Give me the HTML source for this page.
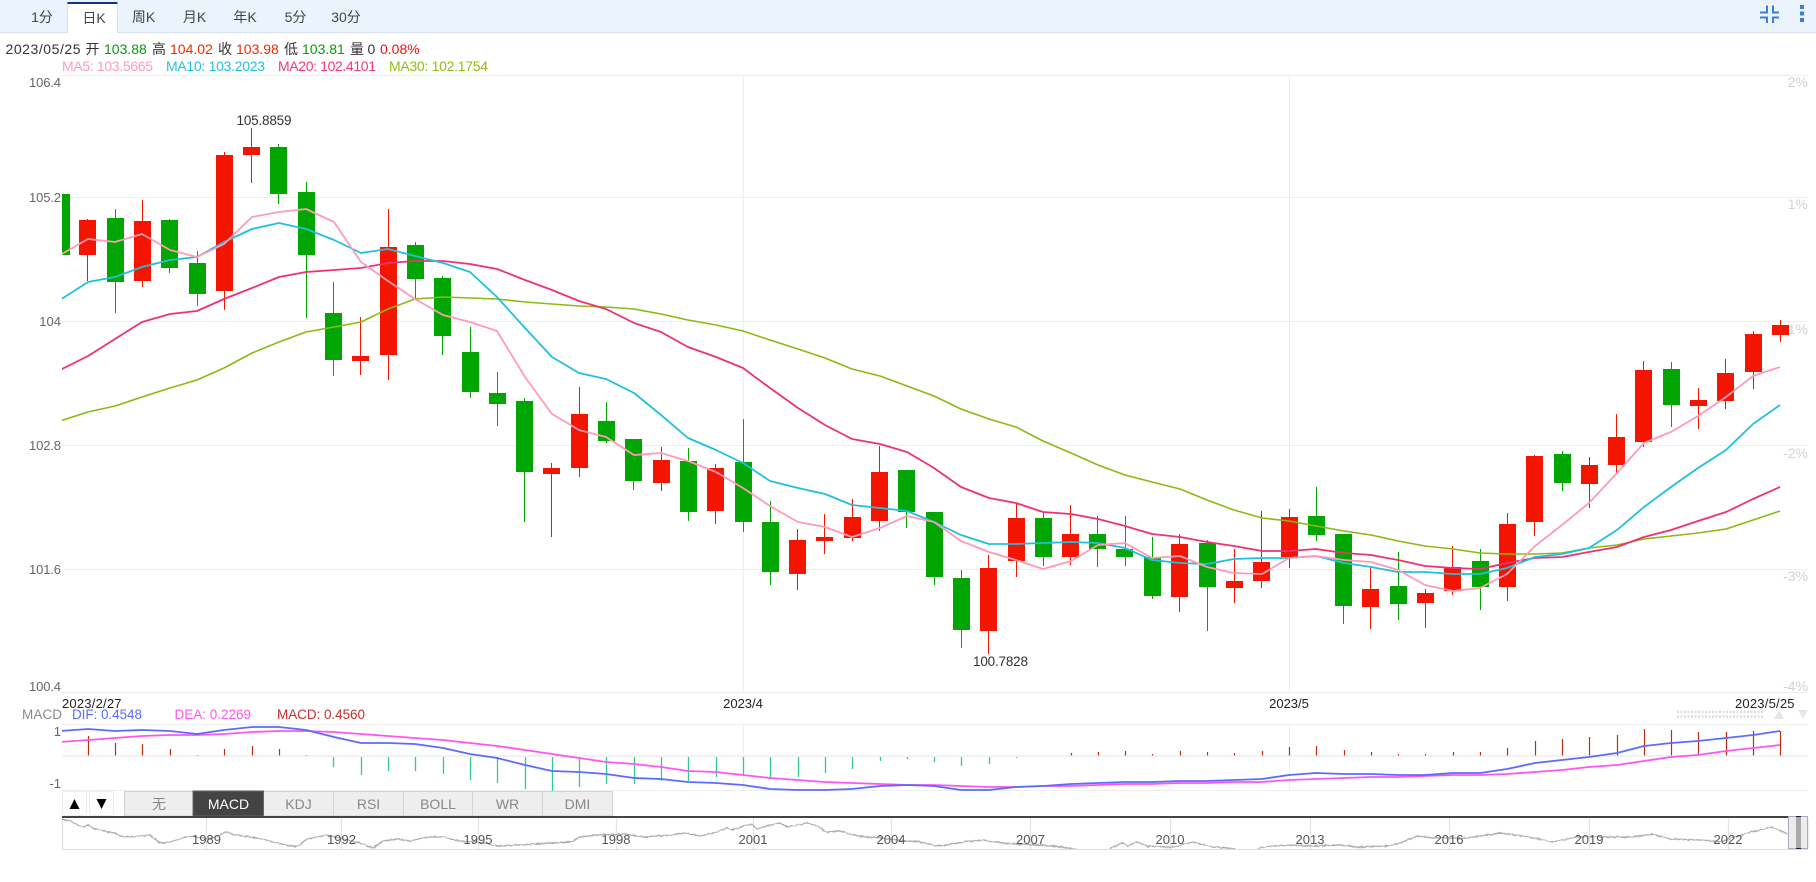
<!DOCTYPE html>
<html lang="zh-CN">
<head>
<meta charset="utf-8">
<title>K线图</title>
<style>
html,body{margin:0;padding:0;background:#fff;width:1816px;height:882px;overflow:hidden}
svg{display:block}
text{font-family:"Liberation Sans","Noto Sans CJK SC",sans-serif}
.ma{fill:none;stroke-linejoin:round}
.tab{font-size:14px;fill:#444;text-anchor:middle}
.ax{font-size:13px;fill:#666;text-anchor:end}
.rx{font-size:14px;fill:#d2d2d2;text-anchor:end}
.dt{font-size:13px;fill:#222}
.btn{font-size:14px;fill:#888;text-anchor:middle}
.yr{font-size:13px;fill:#555;text-anchor:middle}
.i{font-size:14px}
</style>
</head>
<body>
<svg width="1816" height="882" viewBox="0 0 1816 882" xmlns="http://www.w3.org/2000/svg">
<defs>
<clipPath id="cm"><rect x="62" y="60" width="1746" height="640"/></clipPath>
<clipPath id="cd"><rect x="62" y="724" width="1746" height="67"/></clipPath>
<clipPath id="cn"><rect x="62" y="818" width="1726" height="31"/></clipPath>
<filter id="jit" filterUnits="userSpaceOnUse" x="50" y="810" width="1760" height="50">
<feTurbulence type="fractalNoise" baseFrequency="0.3" numOctaves="2" seed="4"/>
<feDisplacementMap in="SourceGraphic" scale="2.5" xChannelSelector="G" yChannelSelector="R"/>
</filter>
</defs>

<!-- top bar -->
<rect x="0" y="0" width="1816" height="32" fill="#ebf3fd"/>
<rect x="0" y="32" width="1816" height="1" fill="#d6e0f0"/>
<rect x="67.5" y="2" width="50" height="31" fill="#fff"/>
<rect x="67" y="3" width="1" height="30" fill="#d6e0f0"/>
<rect x="117" y="3" width="1" height="30" fill="#d6e0f0"/>
<rect x="67.5" y="2" width="50" height="2" fill="#14308c"/>
<text class="tab" x="42" y="22">1分</text>
<text class="tab" x="94" y="23">日K</text>
<text class="tab" x="143.5" y="22">周K</text>
<text class="tab" x="194.5" y="22">月K</text>
<text class="tab" x="245" y="22">年K</text>
<text class="tab" x="295.5" y="22">5分</text>
<text class="tab" x="346" y="22">30分</text>
<path d="M1760 12.5H1767V5.5M1779 12.5H1773V5.5M1760 17.5H1767V23M1779 17.5H1773V23" fill="none" stroke="#3f7cd4" stroke-width="2"/>
<path d="M1800 5h4v4h-4zM1800 11.5h4v4h-4zM1800 18h4v4h-4z" fill="#3f7cd4"/>

<!-- info rows -->
<g class="i">
<text x="5.5" y="54" fill="#333" textLength="75">2023/05/25</text>
<text x="85.5" y="54" fill="#333">开</text>
<text x="104" y="54" fill="#0a9a0a">103.88</text>
<text x="152" y="54" fill="#333">高</text>
<text x="170" y="54" fill="#f22a00">104.02</text>
<text x="218" y="54" fill="#333">收</text>
<text x="236" y="54" fill="#f22a00">103.98</text>
<text x="284" y="54" fill="#333">低</text>
<text x="302" y="54" fill="#0a9a0a">103.81</text>
<text x="350" y="54" fill="#333">量</text>
<text x="367.5" y="54" fill="#333">0</text>
<text x="380" y="54" fill="#f51010">0.08%</text>
<text x="62" y="71" fill="#ff9cb9" textLength="91">MA5: 103.5665</text>
<text x="166" y="71" fill="#22c1e0" textLength="99">MA10: 103.2023</text>
<text x="278" y="71" fill="#f2367d" textLength="98">MA20: 102.4101</text>
<text x="389" y="71" fill="#92bc14" textLength="99">MA30: 102.1754</text>
</g>

<!-- grid -->
<path d="M62 75.5H1808M62 197.5H1808M62 321.5H1808M62 445.5H1808M62 569.5H1808M62 692.5H1808M743.5 75V692M1289.5 75V692" stroke="#eeeeee" stroke-width="1" fill="none"/>

<!-- axis labels -->
<text class="ax" x="61" y="87" textLength="32">106.4</text>
<text class="ax" x="61" y="202" textLength="32">105.2</text>
<text class="ax" x="61" y="326">104</text>
<text class="ax" x="61" y="450" textLength="32">102.8</text>
<text class="ax" x="61" y="574" textLength="32">101.6</text>
<text class="ax" x="61" y="691" textLength="32">100.4</text>
<text class="rx" x="1808" y="87">2%</text>
<text class="rx" x="1808" y="209">1%</text>
<text class="rx" x="1808" y="334">-1%</text>
<text class="rx" x="1808" y="458">-2%</text>
<text class="rx" x="1808" y="581">-3%</text>
<text class="rx" x="1808" y="691">-4%</text>

<!-- candles -->
<g clip-path="url(#cm)" shape-rendering="crispEdges">
<path fill="none" stroke="#f41500" stroke-width="1" d="M87.5 219V281M142.5 200V287M224.5 152V310M251.5 128V183M360.5 317V375M388.5 209V380M551.5 463V537M579.5 387V477M661.5 447V491M715.5 464V524M797.5 529V590M824.5 514V554M852.5 499V541M879.5 446V531M988.5 555V654M1016.5 504V577M1070.5 505V565M1179.5 534V612M1234.5 549V603M1261.5 511V588M1289.5 509V568M1370.5 567V629M1425.5 589V628M1452.5 546V595M1507.5 513V601M1534.5 455V536M1589.5 457V508M1616.5 414V473M1643.5 361V447M1698.5 388V429M1725.5 359V409M1753.5 331V389M1780.5 320V342"/>
<path fill="none" stroke="#02a602" stroke-width="1" d="M115.5 209V313M169.5 219V273M197.5 251V306M278.5 144V204M306.5 182V318M333.5 282V376M415.5 242V300M442.5 276V355M470.5 327V398M497.5 372V426M524.5 398V522M606.5 402V443M633.5 439V490M688.5 448V521M743.5 419V532M770.5 501V585M906.5 470V528M934.5 512V585M961.5 570V648M1043.5 513V566M1097.5 516V567M1125.5 516V566M1152.5 537V599M1207.5 540V631M1316.5 487V541M1343.5 534V624M1398.5 552V620M1480.5 549V610M1562.5 451V491M1671.5 362V427"/>
<path fill="#f41500" d="M79 220h17v35h-17zM134 221h17v60h-17zM216 155h17v136h-17zM243 147h17v8h-17zM352 356h17v5h-17zM380 247h17v108h-17zM543 468h17v6h-17zM571 414h17v54h-17zM653 460h17v23h-17zM707 468h17v43h-17zM789 540h17v34h-17zM816 537h17v4h-17zM844 517h17v21h-17zM871 472h17v49h-17zM980 568h17v63h-17zM1008 518h17v43h-17zM1062 534h17v23h-17zM1171 544h17v53h-17zM1226 581h17v7h-17zM1253 562h17v19h-17zM1281 517h17v40h-17zM1362 589h17v18h-17zM1417 593h17v10h-17zM1444 567h17v24h-17zM1499 524h17v63h-17zM1526 456h17v66h-17zM1581 465h17v19h-17zM1608 437h17v28h-17zM1635 370h17v72h-17zM1690 400h17v6h-17zM1717 373h17v28h-17zM1745 334h17v38h-17zM1772 325h17v10h-17z"/>
<path fill="#02a602" d="M62 194h8v61h-8zM107 218h17v64h-17zM161 220h17v48h-17zM189 263h17v31h-17zM270 147h17v47h-17zM298 192h17v63h-17zM325 313h17v47h-17zM407 245h17v34h-17zM434 278h17v58h-17zM462 352h17v40h-17zM489 393h17v11h-17zM516 401h17v71h-17zM598 421h17v20h-17zM625 439h17v42h-17zM680 461h17v51h-17zM735 462h17v60h-17zM762 522h17v50h-17zM898 470h17v42h-17zM926 512h17v65h-17zM953 578h17v52h-17zM1035 518h17v39h-17zM1089 534h17v15h-17zM1116 549h17v8h-17zM1144 557h17v39h-17zM1199 543h17v44h-17zM1308 516h17v19h-17zM1335 534h17v72h-17zM1390 586h17v18h-17zM1472 561h17v26h-17zM1554 454h17v29h-17zM1663 369h17v36h-17z"/>
</g>

<!-- moving averages -->
<g clip-path="url(#cm)">
<polyline class="ma" stroke="#8db812" stroke-width="1.6" points="60,421 88,412 115,406 142,397 170,388 197,380 224,368 252,353 279,342 306,332 334,327 361,322 388,309 415,299 443,297 470,298 497,299 525,302 552,304 579,306 606,307 634,309 661,314 688,320 716,325 743,331 770,340 798,349 825,358 852,369 880,376 907,386 934,396 961,409 989,419 1016,427 1043,441 1071,453 1098,465 1125,475 1152,482 1180,489 1207,500 1234,510 1262,518 1289,521 1316,526 1344,531 1371,535 1398,541 1425,546 1453,549 1480,553 1507,554 1535,554 1562,553 1589,548 1617,545 1644,539 1671,536 1698,533 1726,529 1753,520 1780,511"/>
<polyline class="ma" stroke="#ee3176" stroke-width="1.8" points="60,370 88,356 115,339 142,322 170,314 197,311 224,299 252,288 279,277 306,272 334,270 361,268 388,263 415,261 443,261 470,264 497,269 525,280 552,290 579,301 606,309 634,323 661,332 688,347 716,357 743,368 770,388 798,408 825,425 852,439 880,444 907,452 934,468 961,487 989,498 1016,503 1043,512 1071,514 1098,519 1125,526 1152,534 1180,537 1207,542 1234,546 1262,551 1289,551 1316,549 1344,553 1371,555 1398,560 1425,566 1453,568 1480,569 1507,563 1535,558 1562,557 1589,552 1617,547 1644,537 1671,530 1698,521 1726,512 1753,499 1780,487"/>
<polyline class="ma" stroke="#1fc0de" stroke-width="1.8" points="60,300 88,282 115,277 142,267 170,260 197,257 224,242 252,229 279,223 306,229 334,240 361,253 388,249 415,256 443,263 470,272 497,297 525,328 552,357 579,373 606,379 634,393 661,415 688,438 716,450 743,463 770,481 798,488 825,494 852,505 880,508 907,511 934,522 961,535 989,544 1016,544 1043,543 1071,542 1098,543 1125,548 1152,560 1180,563 1207,564 1234,559 1262,558 1289,558 1316,556 1344,563 1371,567 1398,572 1425,572 1453,574 1480,574 1507,568 1535,557 1562,554 1589,548 1617,530 1644,507 1671,487 1698,468 1726,450 1753,424 1780,405"/>
<polyline class="ma" stroke="#ff9ab8" stroke-width="1.8" points="60,255 88,239 115,242 142,234 170,250 197,257 224,244 252,217 279,212 306,209 334,222 361,262 388,281 415,299 443,315 470,322 497,331 525,377 552,414 579,430 606,437 634,455 661,453 688,461 716,472 743,488 770,506 798,522 825,527 852,537 880,528 907,516 934,522 961,541 989,552 1016,560 1043,569 1071,561 1098,545 1125,543 1152,558 1180,556 1207,567 1234,573 1262,574 1289,558 1316,556 1344,560 1371,562 1398,570 1425,585 1453,591 1480,588 1507,574 1535,546 1562,525 1589,503 1617,473 1644,443 1671,432 1698,416 1726,397 1753,376 1780,367"/>
</g>

<text x="236.5" y="125" font-size="13.5" fill="#333" textLength="55">105.8859</text>
<text x="973" y="666" font-size="13.5" fill="#333" textLength="55">100.7828</text>

<!-- x axis -->
<text class="dt" x="62" y="708" textLength="59.5">2023/2/27</text>
<text class="dt" x="743" y="708" text-anchor="middle">2023/4</text>
<text class="dt" x="1289" y="708" text-anchor="middle">2023/5</text>
<text class="dt" x="1735" y="708" textLength="59.5">2023/5/25</text>

<!-- macd legend -->
<text x="22" y="719" font-size="13.5" fill="#888" textLength="40">MACD</text>
<text x="72" y="719" font-size="13.5" fill="#5a6cff" textLength="70">DIF: 0.4548</text>
<text x="174.5" y="719" font-size="13.5" fill="#ff55f0" textLength="76.5">DEA: 0.2269</text>
<text x="277" y="719" font-size="13.5" fill="#c43030" textLength="88">MACD: 0.4560</text>

<!-- dotted slider + arrows -->
<path d="M1677 712H1763M1677 716.5H1763" stroke="#dcdcdc" stroke-width="2.5" stroke-dasharray="2 1.5" fill="none"/>
<path d="M1774 719l5-9 5 9z" fill="#e6e6e6"/>
<path d="M1798 710l5 9 5-9z" fill="#e6e6e6"/>

<!-- macd grid -->
<path d="M62 724.5H1808M62 790.5H1808M743.5 724V790M1289.5 724V790" stroke="#eeeeee" fill="none"/>
<rect x="62" y="755" width="1746" height="2" fill="#f2f2f2"/>
<text class="ax" x="61" y="736">1</text>
<text class="ax" x="61" y="788">-1</text>

<g clip-path="url(#cd)">
<path fill="none" stroke="#bd2e10" stroke-width="1.2" d="M88.5 755.5V736M115.5 755.5V743M142.5 755.5V744M170.5 755.5V749M197.5 755.5V755M224.5 755.5V749M252.5 755.5V746M279.5 755.5V749M306.5 755.5V755M1071.5 755.5V753M1098.5 755.5V752M1125.5 755.5V751M1152.5 755.5V754M1180.5 755.5V751M1207.5 755.5V752M1234.5 755.5V753M1262.5 755.5V751M1289.5 755.5V747M1316.5 755.5V746M1344.5 755.5V750M1371.5 755.5V752M1398.5 755.5V754M1425.5 755.5V754M1453.5 755.5V752M1480.5 755.5V752M1507.5 755.5V748M1535.5 755.5V741M1562.5 755.5V739M1589.5 755.5V737M1617.5 755.5V735M1644.5 755.5V729M1671.5 755.5V730M1698.5 755.5V732M1726.5 755.5V732M1753.5 755.5V731M1780.5 755.5V731"/>
<path fill="none" stroke="#33c79c" stroke-width="1.3" d="M333.5 757V767M361.5 757V775M388.5 757V771M415.5 757V771M443.5 757V774M470.5 757V780M497.5 757V783M525.5 757V789M552.5 757V791M579.5 757V787M606.5 757V784M634.5 757V784M661.5 757V781M688.5 757V781M716.5 757V777M743.5 757V776M770.5 757V779M798.5 757V777M825.5 757V773M852.5 757V769M880.5 757V761M907.5 757V759M934.5 757V762M961.5 757V766M989.5 757V764M1016.5 757V758"/>
<polyline class="ma" stroke="#ff55f0" stroke-width="1.8" points="60,742 88,740 115,738 142,736 170,735 197,735 224,734 252,732 279,731 306,731 334,732 361,734 388,736 415,738 443,740 470,743 497,746 525,750 552,754 579,758 606,762 634,764 661,767 688,771 716,772 743,775 770,778 798,780 825,782 852,783 880,784 907,785 934,785 961,786 989,787 1016,787 1043,786 1071,786 1098,785 1125,784 1152,784 1180,783 1207,783 1234,782 1262,782 1289,780 1316,779 1344,778 1371,777 1398,777 1425,776 1453,775 1480,775 1507,774 1535,772 1562,770 1589,767 1617,765 1644,761 1671,757 1698,755 1726,751 1753,748 1780,745"/>
<polyline class="ma" stroke="#5a6cff" stroke-width="1.8" points="60,731 88,729 115,731 142,730 170,731 197,734 224,730 252,727 279,727 306,730 334,737 361,743 388,743 415,744 443,748 470,754 497,758 525,765 552,771 579,772 606,774 634,778 661,779 688,782 716,783 743,785 770,789 798,790 825,790 852,789 880,786 907,785 934,786 961,790 989,790 1016,787 1043,786 1071,784 1098,783 1125,782 1152,782 1180,781 1207,781 1234,780 1262,779 1289,775 1316,773 1344,774 1371,774 1398,775 1425,775 1453,773 1480,773 1507,769 1535,763 1562,760 1589,757 1617,753 1644,746 1671,743 1698,741 1726,738 1753,735 1780,731"/>
</g>

<!-- buttons -->
<rect x="62.5" y="791.5" width="24" height="24" fill="#fff" stroke="#f0f0f0"/>
<rect x="89.5" y="791.5" width="24" height="24" fill="#fff" stroke="#f0f0f0"/>
<path d="M69.5 809l5-10 5 10z" fill="#000"/>
<path d="M96.5 799l5 10 5-10z" fill="#000"/>
<rect x="124.5" y="791.5" width="488" height="24.5" fill="#eeeeee" stroke="#d4d4d4"/>
<path d="M263.5 791V816M333.5 791V816M403.5 791V816M472.5 791V816M542.5 791V816" stroke="#d4d4d4"/>
<rect x="193" y="791" width="70.5" height="25" fill="#444" stroke="#666"/>
<text class="btn" x="159" y="809">无</text>
<text class="btn" x="228.5" y="809" style="fill:#fff">MACD</text>
<text class="btn" x="298.5" y="809">KDJ</text>
<text class="btn" x="368.5" y="809">RSI</text>
<text class="btn" x="438" y="809">BOLL</text>
<text class="btn" x="507.5" y="809">WR</text>
<text class="btn" x="577.5" y="809">DMI</text>

<!-- navigator -->
<rect x="62" y="816" width="1726" height="2" fill="#444"/>
<path d="M62.5 818V849M1808 818V849M62 849.5H1808" stroke="#dddddd" fill="none"/>
<path d="M206.5 818V849M341.5 818V849M478.5 818V849M616.5 818V849M753.5 818V849M891.5 818V849M1030.5 818V849M1170.5 818V849M1310.5 818V849M1449.5 818V849M1589.5 818V849M1728.5 818V849" stroke="#e4e4e4" stroke-width="1.2" fill="none"/>
<g clip-path="url(#cn)">
<polyline class="ma" stroke="#b0b0b0" stroke-width="1.4" filter="url(#jit)" points="62,819 70,821 78,825 83,827 88,825 93,828 103,831 115,833 120,836 130,837 140,836 150,835 160,843 170,842 183,838 192,836 207,839 217,837 225,832 237,835 250,837 263,839 277,843 290,846 298,846 307,839 317,837 327,835 343,839 360,843 373,848 383,841 397,839 410,841 427,837 443,837 460,841 480,842 497,846 517,845 550,843 571,842 580,837 598,835 625,834 643,837 670,835 683,833 700,836 717,832 727,828 733,830 743,826 752,824 757,829 767,826 779,823 788,827 807,823 817,826 827,832 840,831 853,835 867,837 880,838 907,841 920,842 937,846 947,845 963,842 983,840 1003,843 1017,844 1033,845 1053,846 1070,848 1080,850 1108,851 1113,847 1123,843 1128,846 1137,842 1147,846 1167,847 1173,847 1193,842 1213,847 1230,848 1240,851 1253,851 1260,848 1273,846 1290,845 1310,846 1340,845 1357,847 1387,846 1400,843 1417,836 1433,838 1467,838 1500,833 1523,836 1553,842 1577,837 1607,837 1633,837 1652,834 1670,839 1700,840 1720,842 1747,833 1772,827 1788,834"/>
</g>
<text class="yr" x="206.5" y="844">1989</text>
<text class="yr" x="341.5" y="844">1992</text>
<text class="yr" x="478" y="844">1995</text>
<text class="yr" x="616" y="844">1998</text>
<text class="yr" x="753" y="844">2001</text>
<text class="yr" x="891" y="844">2004</text>
<text class="yr" x="1030.5" y="844">2007</text>
<text class="yr" x="1170" y="844">2010</text>
<text class="yr" x="1310" y="844">2013</text>
<text class="yr" x="1449" y="844">2016</text>
<text class="yr" x="1589" y="844">2019</text>
<text class="yr" x="1728" y="844">2022</text>

<!-- scroll thumb -->
<rect x="1788.5" y="816.5" width="19" height="32" fill="#ececec" stroke="#a6abc0"/>
<rect x="1796" y="816" width="5" height="33" fill="#a9a9a9"/>
<path d="M1796 816h5v1h-5zM1796 848h5v1h-5z" fill="#222"/>
</svg>
</body>
</html>
